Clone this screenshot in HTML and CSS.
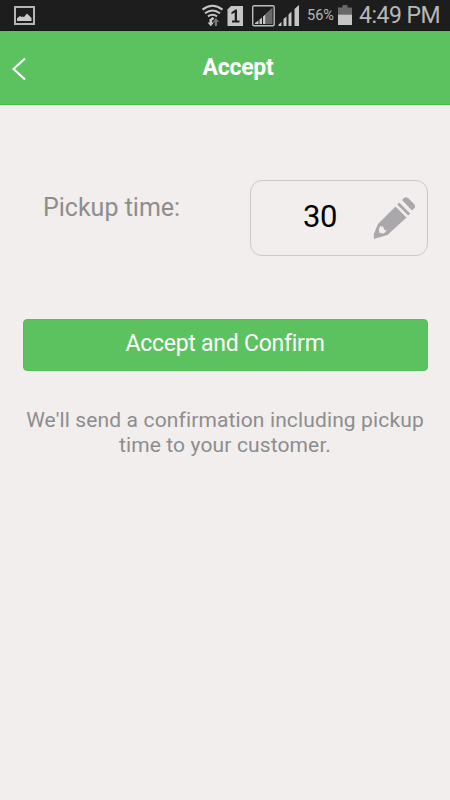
FILE: index.html
```
<!DOCTYPE html>
<html lang="en">
<head>
<meta charset="utf-8">
<title>Accept</title>
<link rel="stylesheet" href="styles.css">
</head>
<body>
<div class="status">
  <svg class="picture" width="22" height="20" viewBox="0 0 22 20">
    <rect x="1" y="1" width="19" height="17" fill="none" stroke="#b5b5b5" stroke-width="2"/>
    <path d="M3 15v-2.500q1.500-2 3-2.500l1.500 1 1-.5 1.500 .5 3-3.500 4.500 4.500v3z" fill="#c8c8c8"/>
  </svg>
  <svg class="signals" width="105" height="32" viewBox="200 0 105 32">
    <g fill="none" stroke="#c6c6c6" stroke-width="2">
      <path d="M202.500 9.600q10-7.600 20 0"/>
      <path d="M205 13.200q7.500-5.600 15 0"/>
      <path d="M208 16.400q4.500-3.200 9 0"/>
    </g>
    <path d="M210.500 18.500l2-1.500 2 1.500-2 2zM209.500 19h2.500v3.500h2l-3.200 3.800-3.300-3.800h2z" fill="#c6c6c6"/>
    <path d="M214.700 26v-4h-2l3.200-4 3.200 4h-2v4z" fill="#777"/>
    <path d="M231 6h12v20h-15.500v-16.500z" fill="#c6c6c6"/>
    <path d="M231.500 12.300l4-2.800h1.500v11h2.500v2h-7.500v-2h2.700v-8l-3.200 1.700z" fill="#1d1d1d"/>
    <rect x="252.700" y="5.700" width="21.500" height="20" rx="1.500" fill="none" stroke="#bdbdbd" stroke-width="1.400"/>
    <path d="M265 14.500l7.500-7v16.500h-7.500z" fill="#686868"/>
    <path d="M255 24v-1l3.500-2.500v3.500zM259.500 24v-4.500l2.500-2v6.500zM263 24v-7.500l2.300-2v9.500z" fill="#c6c6c6"/>
    <path d="M278.500 26v-1.500l3-2.500v4zM283.500 26v-7l3-2.500v9.500zM288.500 26v-11.500l3-3v14.500zM294.500 26v-17l4.500-4v21z" fill="#c6c6c6"/>
  </svg>
  <span class="percent">56%</span>
  <svg class="battery" width="14" height="21" viewBox="0 0 14 21">
    <path d="M4.500 0h5v2.500h4.500v7h-14v-7h4.500z" fill="#686868"/>
    <path d="M0 9.500h14v10.500h-14z" fill="#c6c6c6"/>
  </svg>
  <span class="clock">4:49 PM</span>
</div>
<header class="bar">
  <svg class="back" width="15" height="26" viewBox="0 0 15 26">
    <path d="M13 2.500L1.500 13l11.500 10.500" fill="none" stroke="#fff" stroke-width="2.200"/>
  </svg>
  <h1><span>Accept</span></h1>
</header>
<main>
  <div class="row">
    <label class="label">Pickup time:</label>
    <div class="field">
      <span class="value">30</span>
      <svg class="pencil" width="42" height="43" viewBox="373 197 42 43" fill="#aaa8aa">
        <path fill-rule="evenodd" d="M395.500 206.500L406.500 217.500L387.500 235L373.800 239V234L378 224ZM380.500 226L378.800 229.500L379.500 233L384 233.500L386.500 230.500L384 229.500L383.500 227Z"/>
        <path d="M397.200 204.500l2-2 11 11-2 2z"/>
        <path d="M402 200l2.500-2.500q2-.8 3.800.8l6 6q1.300 2 .3 3.700l-2.600 2.500z"/>
      </svg>
    </div>
  </div>
  <button class="confirm"><span>Accept and Confirm</span></button>
  <p class="note"><span>We'll send a confirmation including pickup</span><br><span>time to your customer.</span></p>
</main>
</body>
</html>
```
FILE: styles.css
```
* { box-sizing: border-box; }
body {
  margin: 0;
  height: 800px;
  overflow: hidden;
  background: #f1eeed;
  font-family: Roboto, sans-serif;
}
.status {
  display: flex;
  height: 31px;
  background: #1d1d1d;
  border-bottom: 1px solid #101a10;
  color: #b8b8b8;
  white-space: nowrap;
}
.picture { margin: 6px 0 0 14px; flex: none; }
.signals { margin-left: 164px; flex: none; }
.percent {
  width: 33px;
  margin-left: 2px;
  font-size: 14.500px;
  line-height: 32px;
}
.battery { margin: 5px 0 0 -2px; flex: none; }
.clock {
  margin-left: 7px;
  font-size: 23px;
  letter-spacing: -0.5px;
  line-height: 32px;
}
.bar {
  display: flex;
  height: 74px;
  padding-left: 12px;
  background: #5cc260;
  border-bottom: 1px solid #43b748;
}
.back { margin-top: 25px; flex: none; }
h1 {
  flex: 1;
  margin: 0 1px 0 0;
  font-size: 23px;
  letter-spacing: -0.25px;
  font-weight: 700;
  line-height: 73px;
  color: #fff;
  text-align: center;
}
main { padding: 75px 22px 0; }
.row { display: flex; justify-content: space-between; }
.label {
  margin: 12px 0 0 21px;
  font-size: 25px;
  line-height: 32px;
  color: #8d8d8d;
}
.field {
  display: flex;
  width: 178px;
  height: 76px;
  border: 1px solid #cbc9c9;
  border-radius: 12px;
}
.value {
  width: 70px;
  margin-left: 52px;
  font-size: 31px;
  letter-spacing: -0.3px;
  line-height: 72px;
  color: #000;
}
.pencil { margin-top: 16px; }
.confirm {
  display: block;
  width: 405px;
  height: 52px;
  margin: 63px 0 0 .5px;
  padding: 0 0 2px;
  border: 1px solid #54bf59;
  border-radius: 4px;
  background: #5cc260;
  color: #fff;
  font: 23px/46px Roboto, sans-serif;
  letter-spacing: -0.25px;
}
.note {
  margin: 37px -10px 0;
  font-size: 21px;
  letter-spacing: 0.13px;
  line-height: 25px;
  color: #8d8d8d;
  text-align: center;
  white-space: nowrap;
}
```
